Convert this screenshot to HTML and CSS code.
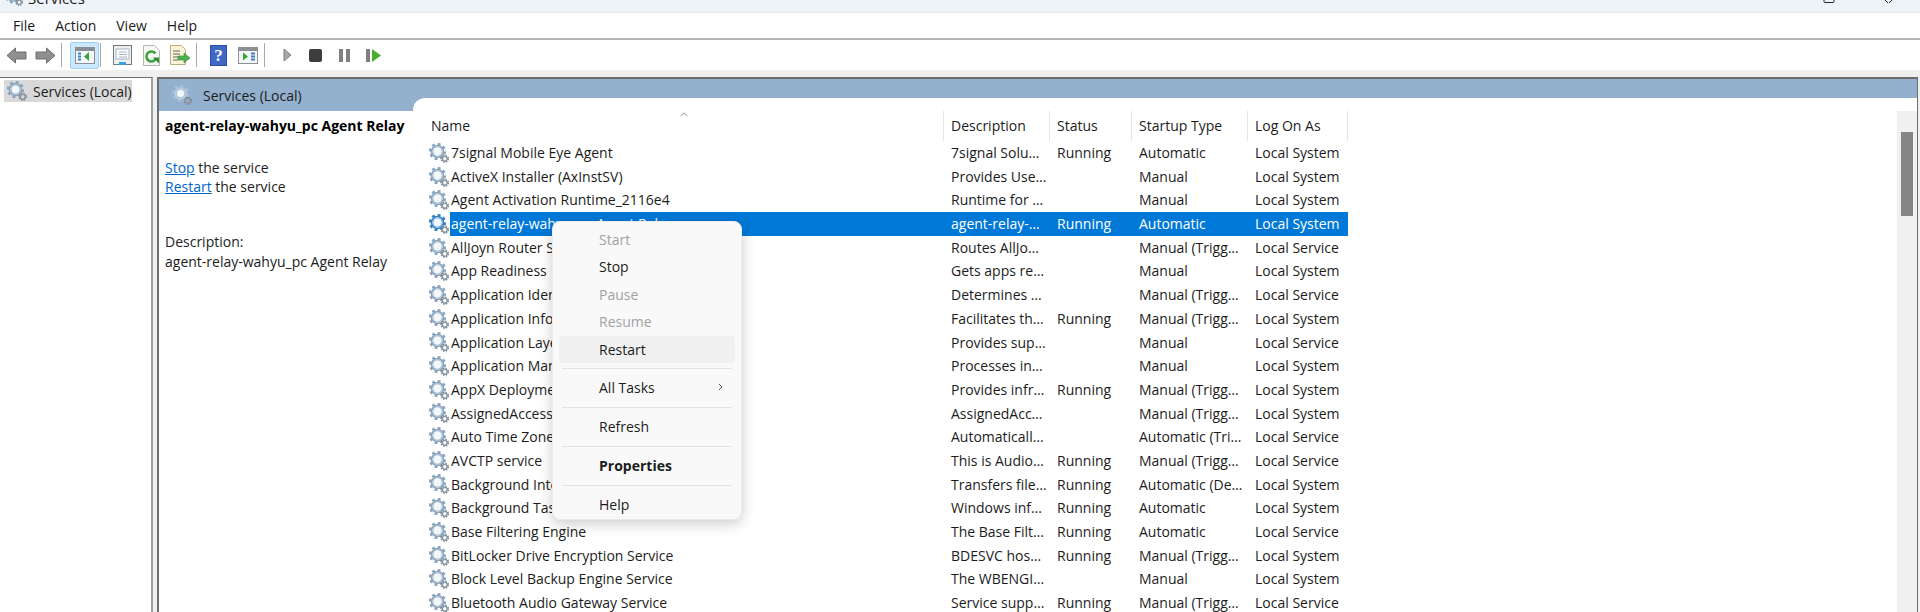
FILE: index.html
```html
<!DOCTYPE html>
<html lang="en">
<head>
    <meta charset="UTF-8">
    <meta name="viewport" content="width=device-width, initial-scale=1.0">
    <title>Services</title>
    <link rel="stylesheet" href="styles.css">
</head>
<body>
    <!-- shared gear icon -->
    <svg class="defs" width="0" height="0">
        <symbol id="gear" viewBox="0 0 20 20">
            <circle cx="8.500" cy="8.500" r="7.400" fill="none" stroke="currentColor" stroke-width="2.400" stroke-dasharray="2.900 2.900"/>
            <circle cx="8.500" cy="8.500" r="5.500" fill="none" stroke="currentColor" stroke-width="2.600"/>
            <circle cx="8.500" cy="8.500" r="5" fill="none" stroke="#c9d8e8" stroke-width=".8"/>
            <circle cx="8.500" cy="8.500" r="3.700" fill="#f2f7fc"/>
            <circle cx="15.800" cy="15.800" r="3.400" fill="none" stroke="#77818c" stroke-width="1.600" stroke-dasharray="1.400 1.300"/>
            <circle cx="15.800" cy="15.800" r="2.400" fill="none" stroke="#8b95a0" stroke-width="1.400"/>
        </symbol>
    </svg>

    <header class="titlebar">
        <svg class="title-gear gear"><use href="#gear"/></svg>
        <span class="title-text">Services</span>
        <div class="win-controls">
            <svg width="13" height="3" viewBox="0 0 13 3"><path d="M1 0v1.500a1 1 0 0 0 1 1h8a1 1 0 0 0 1-1V0" fill="none" stroke="#222" stroke-width="1"/></svg>
            <svg width="13" height="3" viewBox="0 0 13 3"><path d="M3 0l3 3M10 0L7 3" fill="none" stroke="#222" stroke-width="1"/></svg>
        </div>
    </header>

    <nav class="menubar">
        <span>File</span>
        <span>Action</span>
        <span>View</span>
        <span>Help</span>
    </nav>

    <div class="toolbar">
        <div class="tb-btn">
            <svg width="21" height="17" viewBox="0 0 21 17"><path d="M1 8.500L9.500 1v4h10.500v7H9.500v4z" fill="#8f8f8f" stroke="#6f6f6f"/></svg>
        </div>
        <div class="tb-btn">
            <svg width="21" height="17" viewBox="0 0 21 17"><path d="M20 8.500L11.500 1v4H1v7h10.500v4z" fill="#8f8f8f" stroke="#6f6f6f"/></svg>
        </div>
        <div class="tb-sep tb-sep-a"></div>
        <div class="tb-btn tb-active">
            <svg width="20" height="17" viewBox="0 0 20 17">
                <rect x=".5" y=".5" width="19" height="16" fill="#f4f6f8" stroke="#8a8f96"/>
                <rect x="1" y="1" width="18" height="3" fill="#8a8f96"/>
                <path d="M3 6.500h3M3 9.500h3M3 12.500h3" stroke="#3f7fc4" stroke-width="2"/>
                <path d="M9 9.500l5-4.500v9z" fill="#35a935"/>
            </svg>
        </div>
        <div class="tb-sep tb-sep-b"></div>
        <div class="tb-btn">
            <svg width="19" height="21" viewBox="0 0 19 21">
                <rect x=".5" y=".5" width="18" height="19" fill="#eceff2" stroke="#777"/>
                <rect x="3" y="4" width="13" height="10" fill="#fff" stroke="#a6b4c4"/>
                <path d="M6 7h8M6 9.500h8M6 12h8" stroke="#9fb2c8"/>
                <rect x="6" y="17" width="7" height="3" fill="#3aa0de"/>
            </svg>
        </div>
        <div class="tb-btn">
            <svg width="17" height="21" viewBox="0 0 17 21">
                <path d="M.5.500h11l5 5v15H.5z" fill="#f6f6f6" stroke="#b5b5b5"/>
                <path d="M12.500 8.500a5 5 0 1 0 .5 5" fill="none" stroke="#3ba33b" stroke-width="2.600"/>
                <path d="M10 12.500h6v6z" fill="#2e8f2e"/>
            </svg>
        </div>
        <div class="tb-btn">
            <svg width="21" height="21" viewBox="0 0 21 21">
                <path d="M.5.500h11l4 4v15H.5z" fill="#fbf3d4" stroke="#b9ad84"/>
                <path d="M3 6h7M3 9h7M3 12h5M3 15h5" stroke="#5c6670"/>
                <path d="M8 11h6V8l6 5-6 5v-3H8z" fill="#4fb04f" stroke="#2f8f2f" stroke-width=".6"/>
            </svg>
        </div>
        <div class="tb-sep tb-sep-c"></div>
        <div class="tb-btn">
            <svg width="17" height="21" viewBox="0 0 17 21">
                <rect width="17" height="21" fill="#2a4fa8"/>
                <rect x="1" y="1" width="15" height="19" fill="#3f68c4"/>
                <text x="8.500" y="16" class="help-mark" text-anchor="middle">?</text>
            </svg>
        </div>
        <div class="tb-btn">
            <svg width="20" height="17" viewBox="0 0 20 17">
                <rect x=".5" y=".5" width="19" height="16" fill="#f4f6f8" stroke="#8a8f96"/>
                <rect x="1" y="1" width="18" height="3" fill="#8a8f96"/>
                <path d="M5 5.500l5 4-5 4z" fill="#35a935"/>
                <path d="M13 6.500h4M13 9.500h4M13 12.500h4" stroke="#3f7fc4" stroke-width="2"/>
            </svg>
        </div>
        <div class="tb-sep tb-sep-d"></div>
        <div class="tb-btn tb-play">
            <svg width="9" height="14" viewBox="0 0 9 14"><path d="M1 1l7 6-7 6z" fill="#a8a8a8" stroke="#808080"/></svg>
        </div>
        <div class="tb-btn">
            <svg width="13" height="13" viewBox="0 0 13 13"><rect width="13" height="13" rx="2" fill="#3d3d3d"/></svg>
        </div>
        <div class="tb-btn">
            <svg width="11" height="13" viewBox="0 0 11 13"><path d="M0 0h4v13H0zM7 0h4v13H7z" fill="#808080"/></svg>
        </div>
        <div class="tb-btn">
            <svg width="15" height="13" viewBox="0 0 15 13"><path d="M0 0h4v13H0z" fill="#808080"/><path d="M6 0l9 6.500-9 6.500z" fill="#46b02e"/></svg>
        </div>
    </div>

    <div class="toolstrip"></div>

    <main class="panes">
        <aside class="tree-pane">
            <div class="tree-item">
                <svg class="gear"><use href="#gear"/></svg>
                <span>Services (Local)</span>
            </div>
        </aside>

        <section class="content-pane">
            <div class="details">
                <div class="band">
                    <svg class="gear gear-light"><use href="#gear"/></svg>
                    <span>Services (Local)</span>
                </div>
                <div class="details-body">
                    <h2 class="details-title">agent-relay-wahyu_pc Agent Relay</h2>
                    <p class="details-links"><a href="#">Stop</a> the service<br><a href="#">Restart</a> the service</p>
                    <p class="details-desc">Description:<br>agent-relay-wahyu_pc Agent Relay</p>
                </div>
            </div>

            <div class="list">
                <div class="table">
                    <div class="list-head">
                        <div class="col-name">Name
                            <svg class="sort-mark" width="8" height="5" viewBox="0 0 8 5"><path d="M.5 4L4 .8 7.500 4" fill="none" stroke="#9a9a9a"/></svg>
                        </div>
                        <div>Description</div>
                        <div>Status</div>
                        <div>Startup Type</div>
                        <div>Log On As</div>
                    </div>

                    <div class="row"><svg class="gear"><use href="#gear"/></svg><div class="cells"><span>7signal Mobile Eye Agent</span><span>7signal Solu…</span><span>Running</span><span>Automatic</span><span>Local System</span></div></div>
                    <div class="row"><svg class="gear"><use href="#gear"/></svg><div class="cells"><span>ActiveX Installer (AxInstSV)</span><span>Provides Use…</span><span></span><span>Manual</span><span>Local System</span></div></div>
                    <div class="row"><svg class="gear"><use href="#gear"/></svg><div class="cells"><span>Agent Activation Runtime_2116e4</span><span>Runtime for …</span><span></span><span>Manual</span><span>Local System</span></div></div>
                    <div class="row row-selected"><svg class="gear"><use href="#gear"/></svg><div class="cells"><span>agent-relay-wahyu_pc Agent Relay</span><span>agent-relay-…</span><span>Running</span><span>Automatic</span><span>Local System</span></div></div>
                    <div class="row"><svg class="gear"><use href="#gear"/></svg><div class="cells"><span>AllJoyn Router Service</span><span>Routes AllJo…</span><span></span><span>Manual (Trigg…</span><span>Local Service</span></div></div>
                    <div class="row"><svg class="gear"><use href="#gear"/></svg><div class="cells"><span>App Readiness</span><span>Gets apps re…</span><span></span><span>Manual</span><span>Local System</span></div></div>
                    <div class="row"><svg class="gear"><use href="#gear"/></svg><div class="cells"><span>Application Identity</span><span>Determines …</span><span></span><span>Manual (Trigg…</span><span>Local Service</span></div></div>
                    <div class="row"><svg class="gear"><use href="#gear"/></svg><div class="cells"><span>Application Information</span><span>Facilitates th…</span><span>Running</span><span>Manual (Trigg…</span><span>Local System</span></div></div>
                    <div class="row"><svg class="gear"><use href="#gear"/></svg><div class="cells"><span>Application Layer Gateway Service</span><span>Provides sup…</span><span></span><span>Manual</span><span>Local Service</span></div></div>
                    <div class="row"><svg class="gear"><use href="#gear"/></svg><div class="cells"><span>Application Management</span><span>Processes in…</span><span></span><span>Manual</span><span>Local System</span></div></div>
                    <div class="row"><svg class="gear"><use href="#gear"/></svg><div class="cells"><span>AppX Deployment Service</span><span>Provides infr…</span><span>Running</span><span>Manual (Trigg…</span><span>Local System</span></div></div>
                    <div class="row"><svg class="gear"><use href="#gear"/></svg><div class="cells"><span>AssignedAccessManager Service</span><span>AssignedAcc…</span><span></span><span>Manual (Trigg…</span><span>Local System</span></div></div>
                    <div class="row"><svg class="gear"><use href="#gear"/></svg><div class="cells"><span>Auto Time Zone Updater</span><span>Automaticall…</span><span></span><span>Automatic (Tri…</span><span>Local Service</span></div></div>
                    <div class="row"><svg class="gear"><use href="#gear"/></svg><div class="cells"><span>AVCTP service</span><span>This is Audio…</span><span>Running</span><span>Manual (Trigg…</span><span>Local Service</span></div></div>
                    <div class="row"><svg class="gear"><use href="#gear"/></svg><div class="cells"><span>Background Intelligent Transfer Service</span><span>Transfers file…</span><span>Running</span><span>Automatic (De…</span><span>Local System</span></div></div>
                    <div class="row"><svg class="gear"><use href="#gear"/></svg><div class="cells"><span>Background Tasks Infrastructure Service</span><span>Windows inf…</span><span>Running</span><span>Automatic</span><span>Local System</span></div></div>
                    <div class="row"><svg class="gear"><use href="#gear"/></svg><div class="cells"><span>Base Filtering Engine</span><span>The Base Filt…</span><span>Running</span><span>Automatic</span><span>Local Service</span></div></div>
                    <div class="row"><svg class="gear"><use href="#gear"/></svg><div class="cells"><span>BitLocker Drive Encryption Service</span><span>BDESVC hos…</span><span>Running</span><span>Manual (Trigg…</span><span>Local System</span></div></div>
                    <div class="row"><svg class="gear"><use href="#gear"/></svg><div class="cells"><span>Block Level Backup Engine Service</span><span>The WBENGI…</span><span></span><span>Manual</span><span>Local System</span></div></div>
                    <div class="row"><svg class="gear"><use href="#gear"/></svg><div class="cells"><span>Bluetooth Audio Gateway Service</span><span>Service supp…</span><span>Running</span><span>Manual (Trigg…</span><span>Local Service</span></div></div>
                </div>

                <div class="scrollbar"><div class="scroll-thumb"></div></div>
            </div>
        </section>
    </main>

    <!-- right-click menu -->
    <div class="context-menu">
        <div class="menu-item disabled">Start</div>
        <div class="menu-item">Stop</div>
        <div class="menu-item disabled">Pause</div>
        <div class="menu-item disabled">Resume</div>
        <div class="menu-item hovered">Restart</div>
        <div class="menu-sep"></div>
        <div class="menu-item">All Tasks
            <svg class="menu-arrow" width="5" height="8" viewBox="0 0 5 8"><path d="M1 1l3 3-3 3" fill="none" stroke="#555"/></svg>
        </div>
        <div class="menu-sep"></div>
        <div class="menu-item">Refresh</div>
        <div class="menu-sep"></div>
        <div class="menu-item bold">Properties</div>
        <div class="menu-sep"></div>
        <div class="menu-item">Help</div>
    </div>
</body>
</html>
```

FILE: styles.css
```css
* {
    box-sizing: border-box;
}

html, body {
    margin: 0;
    height: 612px;
    overflow: hidden;
}

body {
    display: flex;
    flex-direction: column;
    font-family: "Open Sans", "Noto Sans", sans-serif;
    font-size: 14px;
    color: #1c1c1c;
    background-color: #f0f0f0;
}

.defs {
    position: absolute;
}

.gear {
    width: 20px;
    height: 20px;
    flex: none;
    color: #8aa3bd;
}

.gear-light {
    color: #a9c2da;
}

/* title bar, cut off at the top of the picture */
.titlebar {
    display: flex;
    align-items: flex-end;
    height: 13px;
    padding: 0 25px 4px 5px;
    background-color: #eef2f9;
    border-bottom: 1px solid #e4e6ea;
}

.title-gear {
    width: 18px;
    height: 18px;
    margin-bottom: 2px;
}

.title-text {
    margin-left: 5px;
    font-size: 15px;
    line-height: 20px;
}

.win-controls {
    display: flex;
    gap: 46px;
    margin-left: auto;
    align-self: flex-start;
}

.win-controls svg {
    display: block;
}

.menubar {
    display: flex;
    align-items: center;
    height: 27px;
    padding-left: 3px;
    background-color: white;
    border-bottom: 2px solid #b4b4b4;
}

.menubar span {
    padding: 0 10px;
}

.toolbar {
    display: flex;
    align-items: center;
    height: 30px;
    padding-left: 2px;
    background-color: white;
}

.tb-btn {
    display: flex;
    align-items: center;
    justify-content: center;
    width: 29px;
    height: 27px;
    flex: none;
}

.tb-play {
    width: 27px;
}

.tb-active {
    background-color: #cce8ff;
    border: 1px solid #99d1ff;
    border-radius: 2px;
}

.tb-sep {
    width: 1px;
    height: 24px;
    background-color: #a8a8a8;
}

.tb-sep-a {
    margin: 0 8px 0 1px;
}

.tb-sep-b {
    margin: 0 7px 0 1px;
}

.tb-sep-c {
    margin: 0 7px 0 1px;
}

.tb-sep-d {
    margin: 0 9px 0 2px;
}

.help-mark {
    font-family: "Liberation Serif", serif;
    font-size: 17px;
    font-weight: bold;
    fill: white;
}

.toolstrip {
    height: 7px;
    background-color: #f0f0f0;
}

.panes {
    display: flex;
    flex: 1;
    min-height: 0;
    gap: 4px;
    padding-right: 2px;
    background-color: #f0f0f0;
}

.tree-pane {
    width: 153px;
    padding: 2px 0 0 4px;
    background-color: white;
    border-top: 1px solid #6d6d6d;
    border-right: 2px solid #a0a0a0;
}

.tree-item {
    display: flex;
    align-items: center;
    gap: 6px;
    width: 128px;
    height: 22px;
    padding-left: 3px;
    background-color: #d9d9d9;
}

.content-pane {
    display: flex;
    flex: 1;
    min-width: 0;
    background-color: #94b0cf;
    border: 2px solid #6d6d6d;
    border-width: 2px 1px 0 2px;
}

.details {
    display: flex;
    flex-direction: column;
    width: 254px;
    flex: none;
}

.band {
    display: flex;
    align-items: center;
    gap: 11px;
    height: 32px;
    padding-left: 13px;
}

.details-body {
    flex: 1;
    padding: 5px 0 0 6px;
    background-color: white;
}

.details-title {
    margin: 0;
    font-size: 14px;
    line-height: 20px;
    font-weight: bold;
    color: black;
}

.details-links {
    margin: 22px 0 0;
    line-height: 19px;
}

.details-links a {
    color: #0066cc;
}

.details-desc {
    margin: 36px 0 0;
    line-height: 20px;
}

.list {
    display: flex;
    flex: 1;
    min-width: 0;
    margin-top: 19px;
    padding-top: 13px;
    background-color: white;
    border-top-left-radius: 12px;
}

.table {
    flex: 1;
    min-width: 0;
}

.list-head {
    display: grid;
    grid-template-columns: 531px 106px 82px 116px 100px;
    height: 30px;
    line-height: 30px;
}

.list-head div {
    padding-left: 7px;
    border-right: 1px solid #e5e5e5;
}

.list-head .col-name {
    position: relative;
    padding-left: 18px;
}

.sort-mark {
    position: absolute;
    left: 267px;
    top: 1px;
}

.row {
    display: flex;
    align-items: center;
    height: 23.7px;
    padding-left: 16px;
}

.row .gear {
    margin-right: 1px;
}

.cells {
    display: grid;
    grid-template-columns: 494px 106px 82px 116px 100px;
    height: 100%;
    line-height: 23.7px;
    white-space: nowrap;
}

.cells span {
    padding-left: 7px;
}

.cells span:first-child {
    padding-left: 1px;
}

.row-selected .cells {
    background-color: #0078d7;
    color: white;
}

.row-selected .gear {
    color: #2f7fc8;
}

.scrollbar {
    width: 20px;
    flex: none;
    padding: 21px 4px 0;
    background-color: #f0f0f0;
}

.scroll-thumb {
    height: 84px;
    background-color: #858585;
}

.context-menu {
    position: absolute;
    left: 552px;
    top: 221px;
    width: 190px;
    padding: 4px 6px 0;
    background-color: #f9f9f9;
    border: 1px solid #ececec;
    border-radius: 8px;
    box-shadow: 0 4px 14px rgba(0, 0, 0, 0.2);
}

.menu-item {
    position: relative;
    height: 27.4px;
    padding-left: 40px;
    line-height: 27px;
    border-radius: 4px;
}

.menu-item.disabled {
    color: #a2a2a2;
}

.menu-item.hovered {
    background-color: #f0f0f0;
}

.menu-item.bold {
    font-weight: bold;
}

.menu-arrow {
    position: absolute;
    right: 12px;
    top: 9px;
}

.menu-sep {
    height: 1.5px;
    margin: 5px 3px;
    background-color: #e3e3e3;
}
```
